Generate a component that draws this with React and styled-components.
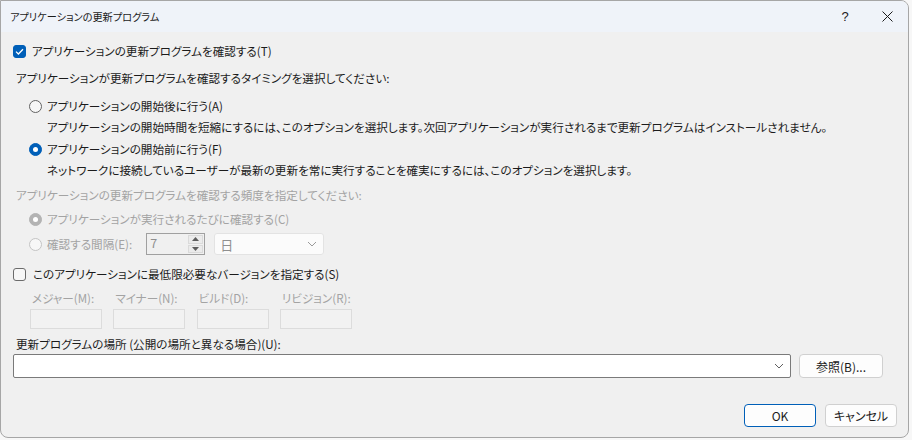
import React from 'react'
import styled, { createGlobalStyle } from 'styled-components'

const GlobalStyle = createGlobalStyle`
  html, body {
    margin: 0;
    padding: 0;
    background: #f7f7f7;
  }
  body {
    font-family: "Noto Sans CJK JP", "Liberation Sans", sans-serif;
    font-size: 11.6px;
    color: #1b1b1b;
    font-feature-settings: "palt" 1;
  }
`

//STYLING
const Window = styled.div`
  box-sizing: border-box;
  width: 909px;
  height: 438px;
  border: 1px solid #a6a6a6;
  border-radius: 0 8px 8px 8px;
  overflow: hidden;
  display: flex;
  flex-direction: column;
  background: #f0f0f0;
`
const TitleBar = styled.div`
  height: 31px;
  flex-shrink: 0;
  display: flex;
  align-items: center;
  background: #eff3f9;
  padding-left: 9px;
`
const TitleText = styled.div`
  flex: 1;
  font-size: 10.2px;
  line-height: 31px;
`
const TitleButton = styled.div`
  width: 42px;
  height: 31px;
  display: flex;
  align-items: center;
  justify-content: center;
  font-family: "Liberation Sans", sans-serif;
  font-size: 13px;
  color: #1b1b1b;
`
const Body = styled.div`
  flex: 1;
  display: flex;
  flex-direction: column;
  padding: 0 11px 0 12px;
`
const Row = styled.div`
  display: flex;
  align-items: center;
  height: ${props => props.$h || 20}px;
  margin-top: ${props => props.$mt || 0}px;
  padding-left: ${props => props.$indent || 0}px;
  color: ${props => props.$disabled ? '#a3a3a3' : '#1b1b1b'};
  white-space: nowrap;
`
const Box = styled.span`
  box-sizing: border-box;
  width: 13px;
  height: 13px;
  border-radius: 3px;
  flex-shrink: 0;
  margin-right: ${props => props.$gap || 6}px;
  display: flex;
  align-items: center;
  justify-content: center;
  background: ${props => props.$checked ? '#005fb8' : '#f7f7f7'};
  border: 1px solid ${props => props.$checked ? '#005fb8' : '#6b6b6b'};
`
const Radio = styled.span`
  box-sizing: border-box;
  width: 13px;
  height: 13px;
  border-radius: 50%;
  flex-shrink: 0;
  margin-right: 5px;
  display: flex;
  align-items: center;
  justify-content: center;
  background: ${props => props.$checked ? (props.$disabled ? '#b3b3b3' : '#005fb8') : '#f7f7f7'};
  border: 1px solid ${props => props.$checked ? (props.$disabled ? '#b3b3b3' : '#005fb8') : (props.$disabled ? '#c4c4c4' : '#636363')};
  &::after {
    content: '';
    display: ${props => props.$checked ? 'block' : 'none'};
    width: 5px;
    height: 5px;
    border-radius: 50%;
    background: #ffffff;
  }
`
const SpinBox = styled.div`
  box-sizing: border-box;
  width: 59px;
  height: 22px;
  margin-left: 14px;
  border: 1px solid #a0a0a0;
  background: #f0f0f0;
  display: flex;
  align-items: stretch;
`
const SpinValue = styled.div`
  flex: 1;
  padding-left: 3px;
  color: #8f8f8f;
  font-size: 12.5px;
  line-height: 17px;
`
const SpinButtons = styled.div`
  width: 15px;
  display: flex;
  flex-direction: column;
  gap: 1px;
  padding: 1px 1px 1px 0;
`
const SpinButton = styled.div`
  flex: 1;
  display: flex;
  align-items: center;
  justify-content: center;
  background: #ebebeb;
  border: 1px solid #dadada;
`
const Select = styled.div`
  box-sizing: border-box;
  width: 110px;
  height: 22px;
  margin-left: 9px;
  border: 1px solid #e3e3e3;
  border-radius: 3px;
  background: #fbfbfb;
  display: flex;
  align-items: center;
  justify-content: space-between;
  padding: 0 6px 0 5px;
  color: #8f8f8f;
  font-size: 13px;
`
const VersionGrid = styled.div`
  display: grid;
  grid-template-columns: repeat(4, 72px);
  column-gap: 11.3px;
  padding-left: 17px;
  margin-top: ${props => props.$mt || 0}px;
`
const VersionLabel = styled.div`
  height: 20px;
  line-height: 20px;
  padding-left: 2px;
  color: #a3a3a3;
  white-space: nowrap;
`
const VersionInput = styled.div`
  box-sizing: border-box;
  height: 20px;
  margin-top: 1px;
  border: 1px solid #dcdcdc;
  background: #f2f2f2;
`
const PathRow = styled.div`
  display: flex;
  align-items: center;
  gap: 8px;
  padding-right: 14px;
`
const Combo = styled.div`
  box-sizing: border-box;
  flex: 1;
  height: 24px;
  background: #ffffff;
  border: 1px solid #7a7a7a;
  border-radius: 2px;
  display: flex;
  align-items: center;
  justify-content: flex-end;
  padding-right: 6px;
`
const Button = styled.button`
  box-sizing: border-box;
  width: ${props => props.$w || 72}px;
  height: ${props => props.$h || 23}px;
  font-family: inherit;
  font-feature-settings: "palt" 1;
  font-size: 12px;
  color: #1b1b1b;
  background: #fdfdfd;
  border: 1px solid ${props => props.$primary ? '#005fb8' : '#d0d0d0'};
  box-shadow: ${props => props.$primary ? 'inset 0 0 0 1px #ffffff' : 'none'};
  border-radius: 4px;
  padding: 0;
  cursor: pointer;
`
const Footer = styled.div`
  display: flex;
  justify-content: flex-end;
  gap: 9px;
  margin-top: 26px;
`

const Chevron = ({ color = '#606060' }) => (
  <svg width="10" height="6" viewBox="0 0 10 6">
    <polyline points="1,1 5,5 9,1" fill="none" stroke={color} strokeWidth="1" />
  </svg>
)

const Triangle = ({ up }) => (
  <svg width="7" height="4" viewBox="0 0 7 4">
    <polygon points={up ? '0,4 7,4 3.5,0' : '0,0 7,0 3.5,4'} fill="#5c5c5c" />
  </svg>
)

const CheckMark = () => (
  <svg width="9" height="7" viewBox="0 0 9 7">
    <polyline points="1,3.6 3.4,6 8,1.2" fill="none" stroke="#ffffff" strokeWidth="1.3" />
  </svg>
)

const CloseIcon = () => (
  <svg width="11" height="11" viewBox="0 0 11 11">
    <line x1="0.5" y1="0.5" x2="10.5" y2="10.5" stroke="#1b1b1b" strokeWidth="1" />
    <line x1="10.5" y1="0.5" x2="0.5" y2="10.5" stroke="#1b1b1b" strokeWidth="1" />
  </svg>
)

const versions = ['メジャー(M):', 'マイナー(N):', 'ビルド(D):', 'リビジョン(R):']

const App = () => {
  return <Window>
    <GlobalStyle />
    <TitleBar>
      <TitleText>アプリケーションの更新プログラム</TitleText>
      <TitleButton>?</TitleButton>
      <TitleButton><CloseIcon /></TitleButton>
    </TitleBar>

    <Body>
      <Row $mt={9}>
        <Box $checked><CheckMark /></Box>
        アプリケーションの更新プログラムを確認する(T)
      </Row>
      <Row $mt={7} $indent={3}>アプリケーションが更新プログラムを確認するタイミングを選択してください:</Row>

      <Row $mt={8} $indent={16}>
        <Radio />
        アプリケーションの開始後に行う(A)
      </Row>
      <Row $mt={1} $indent={34}>アプリケーションの開始時間を短縮にするには、このオプションを選択します。次回アプリケーションが実行されるまで更新プログラムはインストールされません。</Row>

      <Row $mt={2} $indent={16}>
        <Radio $checked />
        アプリケーションの開始前に行う(F)
      </Row>
      <Row $mt={1} $indent={34}>ネットワークに接続しているユーザーが最新の更新を常に実行することを確実にするには、このオプションを選択します。</Row>

      <Row $mt={5} $indent={3} $disabled>アプリケーションの更新プログラムを確認する頻度を指定してください:</Row>
      <Row $mt={4} $indent={16} $disabled>
        <Radio $checked $disabled />
        アプリケーションが実行されるたびに確認する(C)
      </Row>
      <Row $mt={4} $h={22} $indent={16} $disabled>
        <Radio $disabled />
        確認する間隔(E):
        <SpinBox>
          <SpinValue>7</SpinValue>
          <SpinButtons>
            <SpinButton><Triangle up /></SpinButton>
            <SpinButton><Triangle /></SpinButton>
          </SpinButtons>
        </SpinBox>
        <Select>
          日
          <Chevron color="#9a9a9a" />
        </Select>
      </Row>

      <Row $mt={9}>
        <Box $gap={7} />
        このアプリケーションに最低限必要なバージョンを指定する(S)
      </Row>
      <VersionGrid $mt={4}>
        {versions.map(v => <VersionLabel key={v}>{v}</VersionLabel>)}
        {versions.map(v => <VersionInput key={v + 'input'} />)}
      </VersionGrid>

      <Row $mt={5} $h={20} $indent={3}>更新プログラムの場所 (公開の場所と異なる場合)(U):</Row>
      <PathRow>
        <Combo><Chevron /></Combo>
        <Button $w={84} $h={24}>参照(B)...</Button>
      </PathRow>

      <Footer>
        <Button $primary>OK</Button>
        <Button>キャンセル</Button>
      </Footer>
    </Body>
  </Window>
}

export default App
